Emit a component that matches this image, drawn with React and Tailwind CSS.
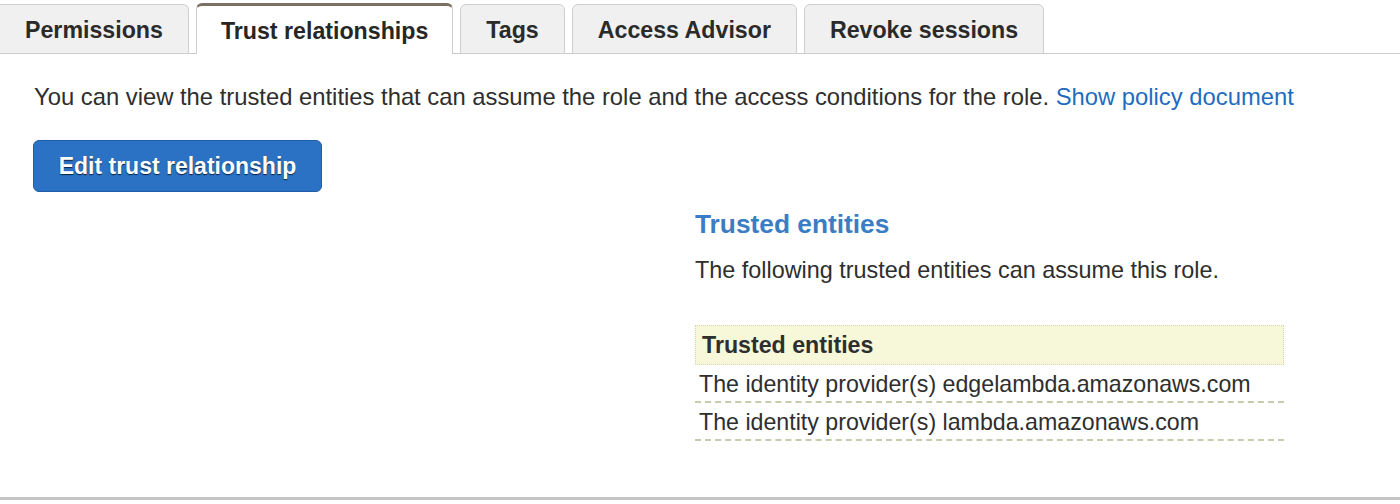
import React from 'react';

const tabs = [
  { label: 'Permissions' },
  { label: 'Trust relationships', active: true },
  { label: 'Tags' },
  { label: 'Access Advisor' },
  { label: 'Revoke sessions' }
];

const entities = [
  'The identity provider(s) edgelambda.amazonaws.com',
  'The identity provider(s) lambda.amazonaws.com'
];

export default function App() {
  return (
    <div className="w-[1400px] h-[504px] bg-white text-[#2e2e2e] font-['Liberation_Sans',Arial,sans-serif] text-[23.2px]">
      <div className="border-b-[3px] border-[#c4c4c4] h-[500px]">
        {/* Tabs */}
        <div className="flex items-end gap-[7px] pt-[3px] border-b border-[#cacaca] h-[54px]">
          {tabs.map((tab, idx) =>
            tab.active ? (
              <div
                key={idx}
                className="relative -mb-px h-[51px] px-[24px] pt-[2px] flex items-center bg-white border-x border-[#cfcfcf] border-t-[3px] border-t-[#7b7064] rounded-t-[6px] font-bold text-[#262626]"
              >
                {tab.label}
              </div>
            ) : (
              <div
                key={idx}
                className={`h-[50px] -mb-px px-[25px] pt-[3px] flex items-center bg-[#eff0ef] border border-[#cfcfcf] rounded-t-[6px] font-bold text-[#2a2a2a] ${idx === 0 ? 'border-l-0 rounded-tl-none' : ''}`}
              >
                {tab.label}
              </div>
            )
          )}
        </div>

        {/* Content */}
        <div className="pl-[34px] pr-[34px]">
          <p className="mt-[29px] leading-[28px] text-[23.8px]">
            You can view the trusted entities that can assume the role and the access conditions for the role.{' '}
            <span className="text-[#1f6cbf]">Show policy document</span>
          </p>

          <button className="mt-[29px] -ml-px w-[289px] h-[52px] rounded-[6px] bg-[#2b72c4] border border-[#1f5fa9] text-white font-bold text-[23px] [text-shadow:0_1px_1px_#0a2240]">
            Edit trust relationship
          </button>

          <div className="grid grid-cols-[628px_1fr] gap-[33px]">
            <div />
            <div className="w-[589px]">
              <h3 className="mt-[15px] text-[26.3px] leading-[34px] font-bold text-[#3b7dc4]">Trusted entities</h3>
              <p className="mt-[15px] leading-[28px] text-[23.4px]">The following trusted entities can assume this role.</p>

              <div className="mt-[41px]">
                <div className="h-[40px] flex items-center px-[6px] bg-[#f7f7d9] border border-dotted border-[#d6d6b4] font-bold">
                  Trusted entities
                </div>
                {entities.map((entity, idx) => (
                  <div
                    key={idx}
                    className="h-[38px] flex items-center pl-[4px] pt-[2px] border-b-2 border-dashed border-[#c9c9ac]"
                  >
                    {entity}
                  </div>
                ))}
              </div>
            </div>
          </div>
        </div>
      </div>
    </div>
  );
}
